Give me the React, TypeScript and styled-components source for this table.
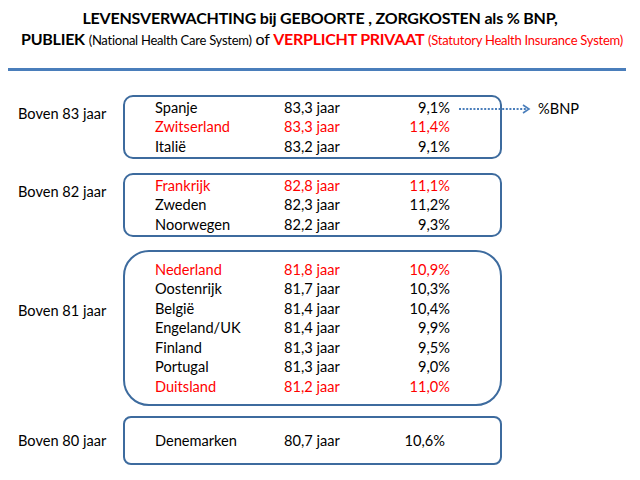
import React from "react";
import styled, { createGlobalStyle } from "styled-components";

const Global = createGlobalStyle`
  html, body { margin: 0; padding: 0; background: #fff; }
  body { font-family: Lato, "Open Sans", sans-serif; color: #000; width: 640px; height: 480px; overflow: hidden; }
`;

const Page = styled.div`
  width: 640px;
  height: 480px;
  display: flex;
  flex-direction: column;
`;

const Header = styled.header`
  display: flex;
  flex-direction: column;
  align-items: center;
  padding-top: 8px;
`;

const Title = styled.h1`
  margin: 0;
  font-size: 16px;
  font-weight: 700;
  line-height: 20px;
  white-space: nowrap;
  letter-spacing: -0.2px;
`;

const Subtitle = styled.div`
  font-size: 16px;
  line-height: 21px;
  white-space: nowrap;
  letter-spacing: -0.25px;
  padding-left: 4px;
`;

const Strong = styled.b<{ $red?: boolean }>`
  font-weight: 700;
  color: ${(p) => (p.$red ? "#ff0000" : "#000")};
`;

const Note = styled.span<{ $red?: boolean }>`
  font-size: 13px;
  color: ${(p) => (p.$red ? "#ff0000" : "#000")};
`;

const Rule = styled.hr`
  margin: 17px 14px 0 8px;
  border: none;
  height: 3px;
  background: #4a7ebb;
`;

const Groups = styled.div`
  display: flex;
  flex-direction: column;
  margin-top: 24px;
`;

const Group = styled.section<{ $gap: number }>`
  display: grid;
  grid-template-columns: 123px 379px;
  margin-top: ${(p) => p.$gap}px;
`;

const Label = styled.div<{ $top?: number }>`
  font-size: 14.6px;
  line-height: 19px;
  padding-left: 18px;
  white-space: nowrap;
  align-self: ${(p) => (p.$top === undefined ? "center" : "start")};
  margin-top: ${(p) => p.$top ?? 0}px;
`;

const Box = styled.div<{ $radius: number; $height: number }>`
  position: relative;
  box-sizing: border-box;
  height: ${(p) => p.$height}px;
  border: 2px solid #3d6b9e;
  border-radius: ${(p) => p.$radius}px;
  padding-left: 30px;
  display: flex;
  flex-direction: column;
  justify-content: center;
`;

const Row = styled.div<{ $red?: boolean }>`
  display: grid;
  grid-template-columns: 129px 100px 66px;
  font-size: 14.6px;
  line-height: 19.4px;
  color: ${(p) => (p.$red ? "#ff0000" : "#000")};
  white-space: nowrap;
`;

const Pct = styled.span<{ $shift?: number }>`
  text-align: right;
  padding-right: ${(p) => p.$shift ?? 0}px;
`;

const Pointer = styled.div`
  position: absolute;
  left: 334px;
  top: 2px;
  display: flex;
  align-items: center;
  gap: 5px;
  font-size: 14.6px;
  line-height: 19px;
  white-space: nowrap;
`;

type Item = { name: string; years: string; pct: string; red?: boolean };

const groups: {
  label: string;
  top?: number;
  radius: number;
  height: number;
  gap: number;
  items: Item[];
  arrow?: boolean;
  shift?: number;
}[] = [
  {
    label: "Boven 83 jaar",
    top: 9,
    radius: 10,
    height: 64,
    gap: 0,
    arrow: true,
    items: [
      { name: "Spanje", years: "83,3 jaar", pct: "9,1%" },
      { name: "Zwitserland", years: "83,3 jaar", pct: "11,4%", red: true },
      { name: "Italië", years: "83,2 jaar", pct: "9,1%" },
    ],
  },
  {
    label: "Boven 82 jaar",
    top: 9,
    radius: 10,
    height: 64,
    gap: 14,
    items: [
      { name: "Frankrijk", years: "82,8 jaar", pct: "11,1%", red: true },
      { name: "Zweden", years: "82,3 jaar", pct: "11,2%" },
      { name: "Noorwegen", years: "82,2 jaar", pct: "9,3%" },
    ],
  },
  {
    label: "Boven 81 jaar",
    top: 51,
    radius: 26,
    height: 156,
    gap: 13,
    items: [
      { name: "Nederland", years: "81,8 jaar", pct: "10,9%", red: true },
      { name: "Oostenrijk", years: "81,7 jaar", pct: "10,3%" },
      { name: "België", years: "81,4 jaar", pct: "10,4%" },
      { name: "Engeland/UK", years: "81,4 jaar", pct: "9,9%" },
      { name: "Finland", years: "81,3 jaar", pct: "9,5%" },
      { name: "Portugal", years: "81,3 jaar", pct: "9,0%" },
      { name: "Duitsland", years: "81,2 jaar", pct: "11,0%", red: true },
    ],
  },
  {
    label: "Boven 80 jaar",
    radius: 8,
    height: 49,
    gap: 10,
    shift: 5,
    items: [{ name: "Denemarken", years: "80,7 jaar", pct: "10,6%" }],
  },
];

const Arrow = () => (
  <svg width="74" height="12" viewBox="0 0 74 12">
    <line x1="0" y1="6" x2="68" y2="6" stroke="#4a7ebb" strokeWidth="2" strokeDasharray="2 1.6" />
    <polyline points="64,2 70,6 64,10" fill="none" stroke="#4a7ebb" strokeWidth="1.6" />
  </svg>
);

export default function App() {
  return (
    <Page>
      <Global />
      <Header>
        <Title>LEVENSVERWACHTING bij GEBOORTE , ZORGKOSTEN als % BNP,</Title>
        <Subtitle>
          <Strong>PUBLIEK</Strong> <Note>(National Health Care System)</Note> of{" "}
          <Strong $red>VERPLICHT PRIVAAT</Strong> <Note $red>(Statutory Health Insurance System)</Note>
        </Subtitle>
      </Header>
      <Rule />
      <Groups>
        {groups.map((g) => (
          <Group key={g.label} $gap={g.gap}>
            <Label $top={g.top}>{g.label}</Label>
            <Box $radius={g.radius} $height={g.height}>
              {g.items.map((it) => (
                <Row key={it.name} $red={it.red}>
                  <span>{it.name}</span>
                  <span>{it.years}</span>
                  <Pct $shift={g.shift}>{it.pct}</Pct>
                </Row>
              ))}
              {g.arrow && (
                <Pointer>
                  <Arrow />
                  <span>%BNP</span>
                </Pointer>
              )}
            </Box>
          </Group>
        ))}
      </Groups>
    </Page>
  );
}
